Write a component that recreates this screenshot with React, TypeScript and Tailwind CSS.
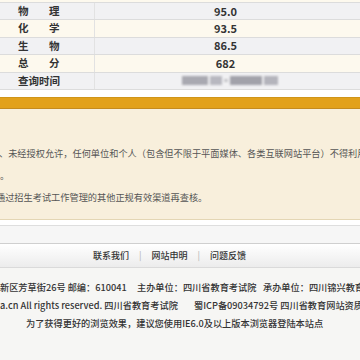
import React from "react";

const rows = [
  { a: "物", b: "理", v: "95.0", bg: "bg-[#f1f1f3]" },
  { a: "化", b: "学", v: "93.5", bg: "bg-[#fdf9ee]" },
  { a: "生", b: "物", v: "86.5", bg: "bg-[#f1f1f3]" },
  { a: "总", b: "分", v: "682", bg: "bg-[#fdf9ee]" },
];

export default function App() {
  return (
    <div className="w-[360px] h-[360px] overflow-hidden bg-[#f6f6f4] font-['Noto_Sans_CJK_SC','Noto_Sans',sans-serif] text-[#333]">
      {/* score table */}
      <div className="bg-white">
        <div className="h-[3px] bg-[#fdf9ee] border-b border-[#dcdcdc]" />
        {rows.map((r, i) => (
          <div key={i} className={`flex h-[17.4px] border-b border-[#dcdcdc] ${r.bg}`}>
            <div className="w-[95px] shrink-0 border-r border-[#e2e2e2] flex items-center justify-start pl-[18px] text-[10.5px] font-bold leading-none">
              <span className="w-[31px] shrink-0 text-left">{r.a}</span>
              <span className="shrink-0 text-left">{r.b}</span>
            </div>
            <div className="flex-1 flex items-center justify-center text-[11px] font-bold leading-none pr-[4px]">
              {r.v}
            </div>
          </div>
        ))}
        <div className="flex h-[17.4px] border-b border-[#dcdcdc] bg-[#f1f1f3]">
          <div className="w-[95px] shrink-0 border-r border-[#e2e2e2] flex items-center pl-[18px] text-[10.5px] font-bold leading-none">
            查询时间
          </div>
          <div className="flex-1 flex items-center pl-[87px]">
            <div className="flex items-center gap-[2px] blur-[1.2px]">
              <div className="w-[26px] h-[9px] bg-[#a9a9b1]" />
              <div className="w-[12px] h-[9px] bg-[#b8b8c0]" />
              <div className="w-[4px] h-[3px] bg-[#c8c8cc]" />
              <div className="w-[32px] h-[9px] bg-[#a2a2aa]" />
              <div className="w-[14px] h-[9px] bg-[#b4b4bc]" />
            </div>
          </div>
        </div>
        <div className="h-[7.5px] bg-white" />
      </div>

      {/* orange bar */}
      <div className="h-[12px] bg-[#e2a11c] border-t border-[#cf9519] border-b border-b-[#c58b1f]" />

      {/* notice */}
      <div className="bg-[#f8efdc] border-b border-[#e4d6b4] pt-[33px] pb-[11px] text-[9.2px] leading-[22px] text-[#555] whitespace-nowrap overflow-hidden">
        <div className="-ml-[1px]">、未经授权允许，任何单位和个人（包含但不限于平面媒体、各类互联网站平台）不得利用</div>
        <div>。</div>
        <div className="-ml-[4px]">通过招生考试工作管理的其他正规有效渠道再查核。</div>
      </div>

      {/* separators */}
      <div className="h-[6px] bg-white border-b border-[#dedede]" />
      <div className="h-[18px] bg-[#f6f6f6] border-b border-[#cfcfcf]" />

      {/* links bar */}
      <div className="h-[24px] bg-gradient-to-b from-white to-[#ececec] border-b border-[#dadada] flex items-center pl-[93px] text-[9px] font-medium text-[#333]">
        <span>联系我们</span>
        <span className="mx-[10px] text-[#bbb]">|</span>
        <span>网站申明</span>
        <span className="mx-[10px] text-[#bbb]">|</span>
        <span>问题反馈</span>
      </div>

      {/* footer */}
      <div className="pt-[10px] text-[9.2px] leading-[18px] font-medium text-[#333] whitespace-nowrap overflow-hidden">
        <div className="flex">
          <span className="w-[137px] shrink-0">新区芳草街26号 邮编：610041</span>
          <span className="w-[126px] shrink-0">主办单位：四川省教育考试院</span>
          <span>承办单位：四川锦兴教育咨询</span>
        </div>
        <div className="flex">
          <span className="w-[194px] shrink-0">a.cn All rights reserved. 四川省教育考试院</span>
          <span>蜀ICP备09034792号 四川省教育网站资质号</span>
        </div>
        <div className="pl-[26px]">为了获得更好的浏览效果，建议您使用IE6.0及以上版本浏览器登陆本站点</div>
      </div>
    </div>
  );
}
